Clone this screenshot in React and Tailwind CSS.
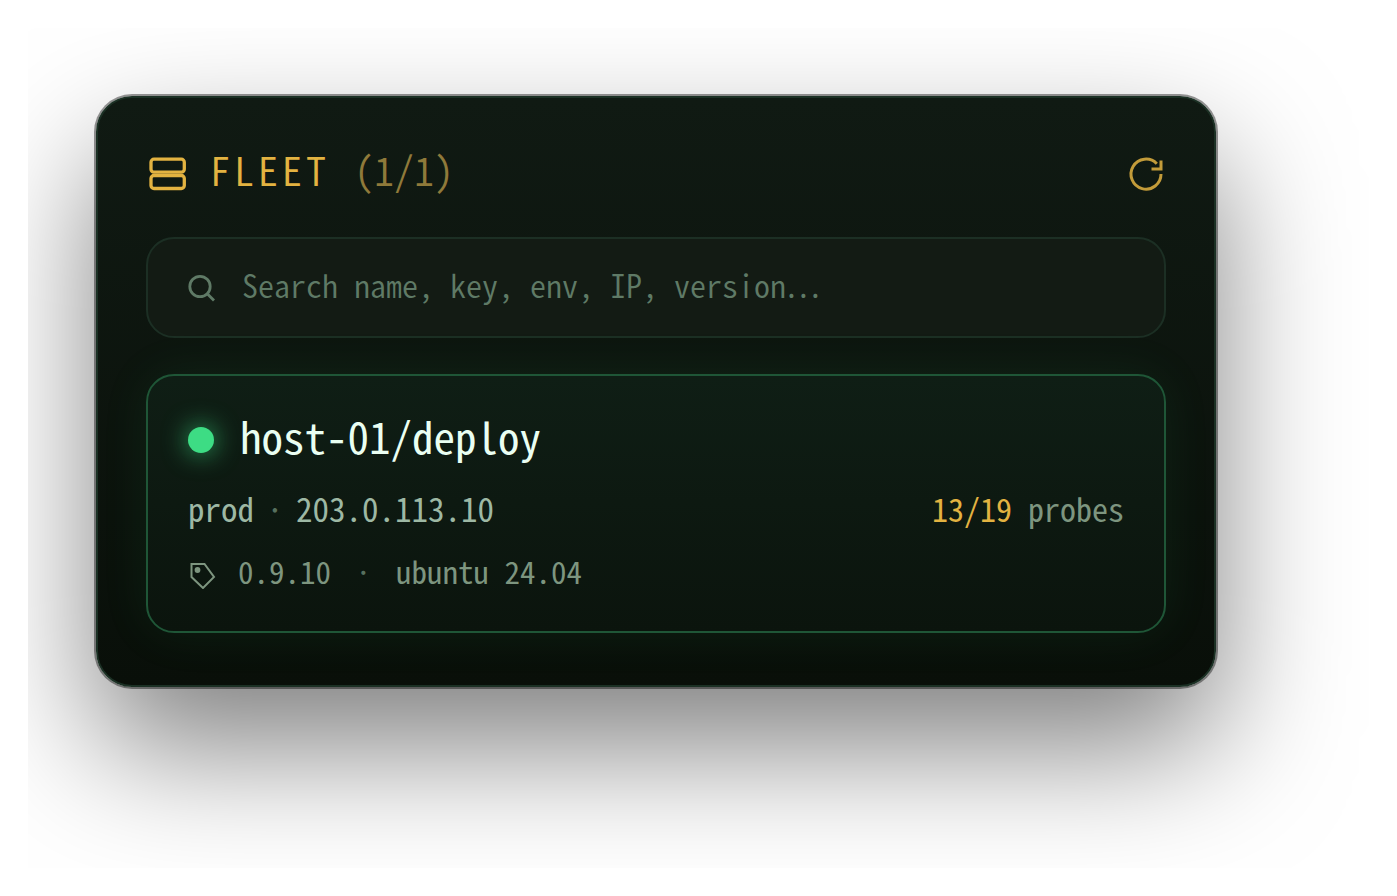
import React, { useState } from 'react'

function RackIcon() {
    return (
        <svg className="w-10 h-10" viewBox="0 0 40 40" fill="none" stroke="currentColor" strokeWidth="3.3" aria-hidden="true">
            <rect x="5" y="5.2" width="33.3" height="13" rx="3" />
            <rect x="5" y="21.5" width="33.3" height="13" rx="3" />
        </svg>
    )
}

function RefreshIcon() {
    return (
        <svg className="w-10 h-10" viewBox="0 0 40 40" fill="none" stroke="currentColor" strokeWidth="3" aria-hidden="true">
            <path d="M30.8 9.7A15 15 0 1 0 35 20" />
            <path d="M25.5 15H35V6.5" />
        </svg>
    )
}

function SearchIcon() {
    return (
        <svg className="w-7 h-7 shrink-0" viewBox="0 0 28 28" fill="none" stroke="currentColor" strokeWidth="2.8" aria-hidden="true">
            <circle cx="12" cy="12.5" r="10.2" />
            <path d="M19.5 20l6.5 6.5" />
        </svg>
    )
}

function TagIcon() {
    return (
        <svg className="w-7 h-7 shrink-0" viewBox="0 0 28 28" fill="none" stroke="currentColor" strokeWidth="2" aria-hidden="true">
            <path d="M3.5 3H16.5L26 16L15 27L3.5 16Z" />
            <circle cx="9.5" cy="9" r="2.9" fill="currentColor" stroke="none" />
        </svg>
    )
}

const hosts = [
    {
        name: 'host-01/deploy',
        env: 'prod',
        ip: '203.0.113.10',
        passed: 13,
        probes: 19,
        version: '0.9.10',
        os: 'ubuntu 24.04',
    },
]

function HostCard({ host }) {
    return (
        <article className="rounded-[28px] border-2 border-[#1f5637] bg-linear-to-b from-[#0f1e15] to-[#0b140d] px-10 pt-9 pb-7 shadow-[0_0_50px_rgba(62,222,132,0.08)]">
            <div className="flex items-center gap-[26px]">
                <span className="size-[26px] rounded-full bg-[#3ddc84] shadow-[0_0_26px_rgba(61,220,132,0.8)]" />
                <h2 className="pb-[10px] text-[43px] leading-[46px] text-[#eafff2]">{host.name}</h2>
            </div>
            <div className="mt-4 flex items-center justify-between pb-2 leading-[48px]">
                <div className="flex text-[33px] text-[#9db8a4]">
                    <span>{host.env}</span>
                    <span className="w-[42px] text-center text-[#57705e]">·</span>
                    <span>{host.ip}</span>
                </div>
                <div className="text-[32px] text-[#7d957f]">
                    <span className="text-[#e3b341]">{host.passed}/{host.probes}</span> probes
                </div>
            </div>
            <div className="mt-[7px] flex items-center text-[31px] leading-[48px] text-[#7d957f]">
                <TagIcon />
                <div className="flex pb-2">
                    <span className="ml-[22px]">{host.version}</span>
                    <span className="w-[65px] text-center text-[#57705e]">·</span>
                    <span>{host.os}</span>
                </div>
            </div>
        </article>
    )
}

export default function App() {
    const [query, setQuery] = useState('')
    const shown = hosts.filter((h) => Object.values(h).join(' ').includes(query))

    return (
        <main className="min-h-screen bg-white p-7 font-['Noto_Sans_CJK_JP','Liberation_Mono',monospace] [font-feature-settings:'hwid']">
            <div className="overflow-hidden pt-[68px] pr-[153px] pb-[181px] pl-[68px]">
                <section className="rounded-[36px] border-2 border-[#1b3024] bg-linear-to-b from-[#101a13] to-[#090f09] px-12 pt-[46px] pb-[52px] shadow-[0_0_0_2px_rgba(0,0,0,0.4),0_60px_130px_rgba(0,0,0,0.5)]">
                    <header className="flex items-center justify-between text-[#e3b341]">
                        <div className="flex items-center gap-6">
                            <RackIcon />
                            <h1 className="pb-[10px] text-[40px] leading-[50px] font-[350]">
                                <span className="tracking-[4px]">FLEET</span>
                                <span className="ml-6 text-[#8f7a3a]">(1/1)</span>
                            </h1>
                        </div>
                        <button type="button" aria-label="Refresh" className="opacity-85">
                            <RefreshIcon />
                        </button>
                    </header>

                    <label className="mt-[33px] flex h-[101px] items-center gap-[26px] rounded-[28px] border-2 border-[#1c2f24] bg-[#131b14] px-10 text-[#5f7a66]">
                        <SearchIcon />
                        <input
                            type="text"
                            aria-label="Search hosts"
                            value={query}
                            onChange={(e) => setQuery(e.target.value)}
                            placeholder="Search name, key, env, IP, version…"
                            className="min-w-0 flex-1 bg-transparent pb-2 text-[32px] font-[350] outline-none placeholder:text-[#5f7a66]"
                        />
                    </label>

                    <div className="mt-9 flex flex-col gap-6">
                        {shown.map((host) => (
                            <HostCard key={host.name} host={host} />
                        ))}
                    </div>
                </section>
            </div>
        </main>
    )
}
